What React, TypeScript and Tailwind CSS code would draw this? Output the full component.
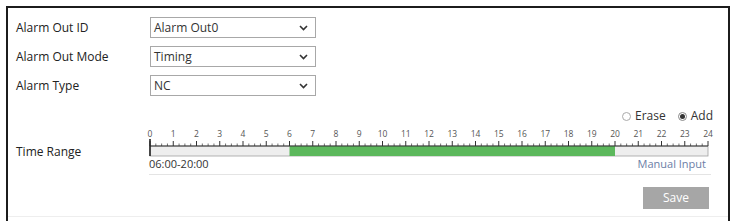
import React from "react";

const Chevron = () => (
  <svg width="9" height="6" viewBox="0 0 9 6" className="shrink-0">
    <path d="M1 1 L4.5 4.5 L8 1" fill="none" stroke="#333" strokeWidth="1.6" />
  </svg>
);

const Select = ({ value }: { value: string }) => (
  <div className="flex h-[21px] w-[166px] items-center justify-between border border-[#a8a8a8] bg-white pl-[3px] pr-[7px] text-[12px] leading-none text-[#333]">
    <span>{value}</span>
    <Chevron />
  </div>
);

const Row = ({ label, value }: { label: string; value: string }) => (
  <div className="flex h-[21px] items-center">
    <div className="w-[134px] text-[12px] text-[#222]">{label}</div>
    <Select value={value} />
  </div>
);

const Ruler = () => {
  const s = 23.25;
  const x0 = 1;
  const ticks: React.ReactNode[] = [];
  for (let i = 0; i <= 24 * 4; i++) {
    const x = x0 + (i * s) / 4;
    const major = i % 4 === 0;
    ticks.push(
      <line
        key={"t" + i}
        x1={x}
        x2={x}
        y1={major ? 14 : 16.5}
        y2={19}
        stroke="#333"
        strokeWidth={major ? 1 : 0.7}
      />
    );
  }
  const nums: React.ReactNode[] = [];
  for (let h = 0; h <= 24; h++) {
    nums.push(
      <text
        key={"n" + h}
        x={x0 + h * s}
        y={10}
        fontSize="8.5"
        textAnchor="middle"
        fill="#555"
        fontFamily="'Open Sans', sans-serif"
      >
        {h}
      </text>
    );
  }
  return (
    <svg width="562" height="30" viewBox="0 0 562 30" className="block overflow-visible">
      {nums}
      <rect x={x0} y={19} width={24 * s} height={10} fill="#eeeeee" stroke="#a0a0a0" strokeWidth="0.8" />
      <rect x={x0 + 6 * s} y={19} width={14 * s} height={10} fill="#5cb85c" />
      <line x1={x0} x2={x0 + 24 * s} y1={19} y2={19} stroke="#333" strokeWidth="1" />
      {ticks}
      <line x1={x0} x2={x0} y1={12} y2={29} stroke="#222" strokeWidth="1.6" />
    </svg>
  );
};

export default function App() {
  return (
    <div className="h-[221px] w-[732px] overflow-hidden bg-white" style={{ fontFamily: "'Open Sans', 'Liberation Sans', sans-serif" }}>
      <div className="ml-[6px] mt-[6px] flex h-[240px] w-[724px] flex-col border-2 border-[#1c1c1c]">
        <div className="flex flex-col gap-[8px] pl-[8px] pt-[9px]">
          <Row label="Alarm Out ID" value="Alarm Out0" />
          <Row label="Alarm Out Mode" value="Timing" />
          <Row label="Alarm Type" value="NC" />
        </div>
        <div className="mt-[13px] flex pl-[8px]">
          <div className="flex w-[133px] items-start pt-[34px] text-[12px] text-[#222]">Time Range</div>
          <div className="flex w-[562px] flex-col">
            <div className="flex h-[14px] items-center justify-end gap-[4px] text-[12px] leading-none text-[#333]">
              <span className="h-[9px] w-[9px] rounded-full border border-[#aaa] bg-white" />
              <span className="mr-[8px]">Erase</span>
              <span className="flex h-[9px] w-[9px] items-center justify-center rounded-full border border-[#888] bg-white">
                <span className="h-[5px] w-[5px] rounded-full bg-[#333]" />
              </span>
              <span className="mr-[-2px]">Add</span>
            </div>
            <div className="mt-[4px]">
              <Ruler />
            </div>
            <div className="flex h-[18px] items-start justify-between border-b border-[#e4e4e4] pr-[5px] pt-[1px] text-[11px] leading-none">
              <span className="text-[#333]">06:00-20:00</span>
              <span className="text-[#6c7ea6]">Manual Input</span>
            </div>
          </div>
        </div>
        <div className="mt-[12px] flex justify-end pr-[19px]">
          <div className="flex h-[22px] w-[66px] items-center justify-center bg-[#a6a6a6] text-[12px] text-white">Save</div>
        </div>
        <div className="mt-[7px] border-t border-[#eeeeee]" />
      </div>
    </div>
  );
}
